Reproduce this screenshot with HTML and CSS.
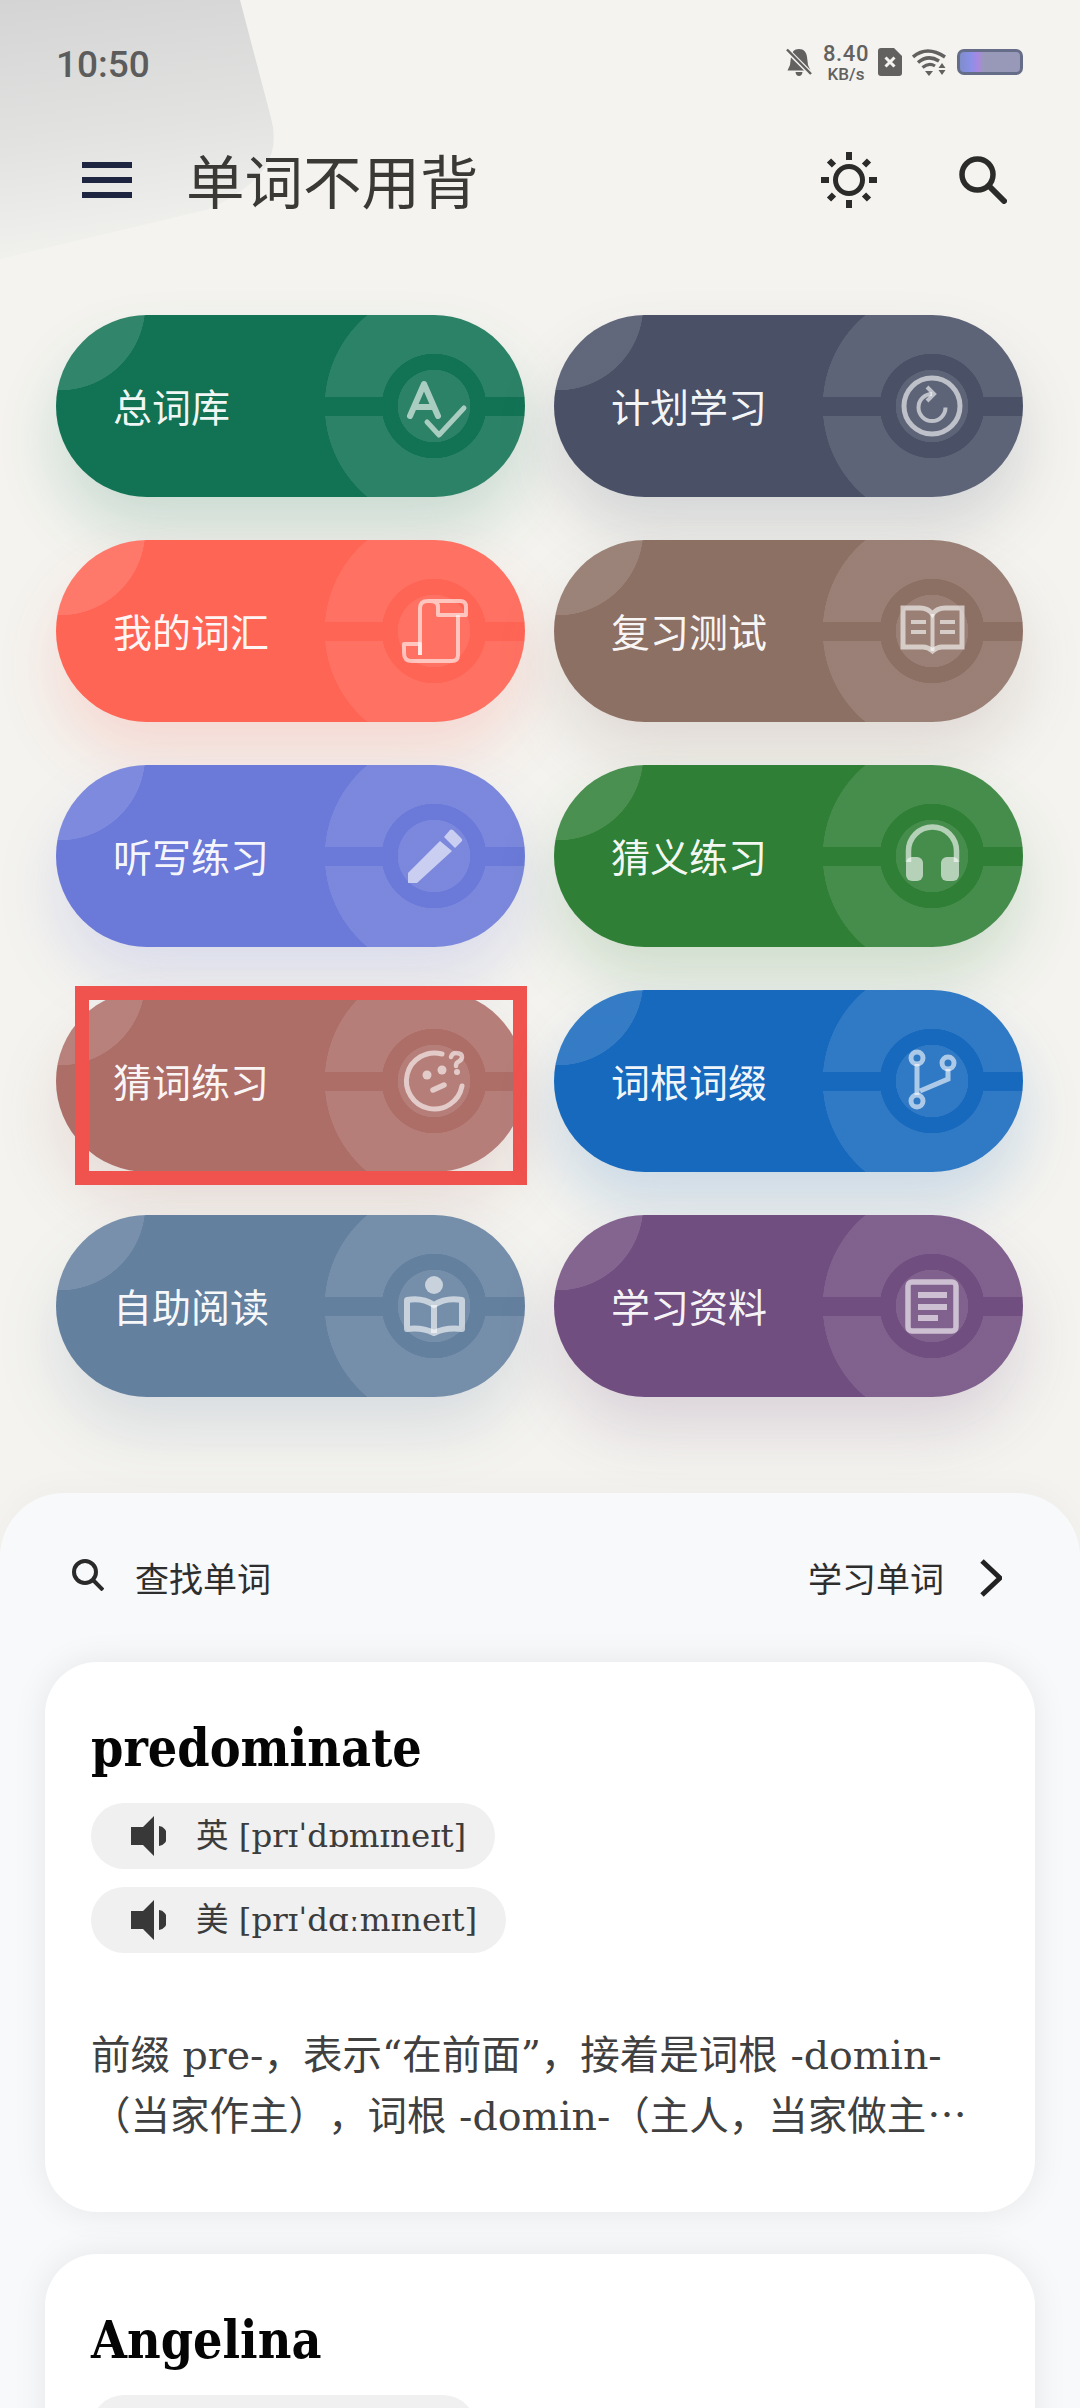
FILE: index.html
```html
<!DOCTYPE html>
<html lang="zh-CN">
<head>
<meta charset="utf-8">
<title>单词不用背</title>
<link rel="stylesheet" href="styles.css">
</head>
<body>
<svg class="decor" width="280" height="262" viewBox="0 0 280 262" aria-hidden="true">
  <defs><linearGradient id="decorFill" x1="0" y1="0" x2="0.15" y2="1"><stop offset="0" stop-color="#d4d4d4"/><stop offset="0.55" stop-color="#e2e2e1"/><stop offset="1" stop-color="#f1f1ee"/></linearGradient></defs>
  <path d="M0 0H240L271 118Q276 136 272 152Q262 186 206 210L0 259Z" fill="url(#decorFill)"/>
</svg>

<header class="statusbar">
  <span class="time">10:50</span>
  <div class="status-icons">
    <svg class="st-bell" width="26" height="28" viewBox="0 0 26 28"><path d="M13 1C8 1 5.500 4.500 5 9L4 17L1.500 22.500H24.500L22 17L21 9C20.500 4.500 18 1 13 1ZM9.500 24H16.500Q16 28 13 28Q10 28 9.500 24Z" fill="#626160"/><path d="M1 2L25 26" stroke="#f4f3ef" stroke-width="5"/><path d="M1 1.500L25 26" stroke="#626160" stroke-width="2.500"/></svg>
    <div class="netspeed"><span class="net-num">8.40</span><span class="net-unit">KB/s</span></div>
    <svg class="st-sim" width="24" height="28" viewBox="0 0 24 28"><path d="M3 0H16L24 8V25Q24 28 21 28H3Q0 28 0 25V3Q0 0 3 0Z" fill="#626160"/><path d="M7.500 9.500L16.500 18.500M16.500 9.500L7.500 18.500" stroke="#f4f3ef" stroke-width="3"/></svg>
    <svg class="st-wifi" width="35" height="28" viewBox="0 0 35 28"><path d="M1 9Q15 -3 33 9" fill="none" stroke="#626160" stroke-width="3.500"/><path d="M6 14.500Q16 6 27 13" fill="none" stroke="#626160" stroke-width="3.500"/><path d="M10.500 19.500Q17 14 23 18" fill="none" stroke="#626160" stroke-width="3.200"/><path d="M13 23H21L17 28Z" fill="#626160"/><path d="M30 15L33.500 20H26.500ZM26.500 22H33.500L30 27Z" fill="#626160"/></svg>
    <div class="battery"></div>
  </div>
</header>

<div class="appbar">
  <div class="menu"><span></span><span></span><span></span></div>
  <h1 class="app-title">单词不用背</h1>
  <svg class="sun" width="58" height="58" viewBox="0 0 58 58" fill="none" stroke="#2b2b2a"><circle cx="29" cy="29" r="13.500" stroke-width="5"/><path d="M29 1V9M29 49V57M1 29H9M49 29H57" stroke-width="6"/><path d="M9 9.500L14 14.500M49 9.500L44 14.500M9 48.500L14 43.500M49 48.500L44 43.500" stroke-width="6"/></svg>
  <svg class="search-big" width="48" height="48" viewBox="0 0 48 48" fill="none" stroke="#2b2b2a"><circle cx="18.500" cy="18.500" r="15.500" stroke-width="5.500"/><path d="M31 31L45 45" stroke-width="6" stroke-linecap="round"/></svg>
</div>

<main class="grid">
  <a class="pill c-green"><span class="pill-label">总词库</span>
    <svg class="pill-icon" viewBox="0 0 72 72" fill="none" stroke="currentColor" stroke-linecap="round" stroke-linejoin="round"><path d="M12 46L26 14L40 46M17 37H35" stroke-width="6"/><path d="M29 52L41 65L66 38" stroke-width="5"/></svg>
  </a>
  <a class="pill c-slate"><span class="pill-label">计划学习</span>
    <svg class="pill-icon" viewBox="0 0 72 72" fill="none" stroke="currentColor"><circle cx="36" cy="36" r="28" stroke-width="5"/><path d="M36 24A13.500 13.500 0 1 0 49.500 37.500" stroke-width="4"/><path d="M31 17L38 24L31 31" stroke-width="4"/></svg>
  </a>
  <a class="pill c-red"><span class="pill-label">我的词汇</span>
    <svg class="pill-icon" viewBox="0 0 72 72" fill="none" stroke="currentColor" stroke-linejoin="round"><path d="M22 60V13Q22 6 30 6H62Q68 6 68 12V20H40V12Q40 6 32 6" stroke-width="4"/><path d="M60 20V60Q60 66 54 66H14Q6 66 6 58V49H22V60" stroke-width="4"/></svg>
  </a>
  <a class="pill c-brown"><span class="pill-label">复习测试</span>
    <svg class="pill-icon" viewBox="0 0 72 72" fill="none" stroke="currentColor"><path d="M7 13H24Q32 13 36.500 19Q41 13 49 13H66V52H46Q41 52 36.500 56Q32 52 27 52H7Z" stroke-width="5"/><path d="M36.500 19V56" stroke-width="4"/><path d="M15 27H30M15 37H30M44 27H59M44 37H59" stroke-width="4"/></svg>
  </a>
  <a class="pill c-peri"><span class="pill-label">听写练习</span>
    <svg class="pill-icon" viewBox="0 0 72 72" fill="currentColor"><path d="M52 10Q53 9 55 10L63 18Q65 20 64 21L57 28L46 17Z"/><path d="M42 21L54 31L19 63H10V53Z"/></svg>
  </a>
  <a class="pill c-forest"><span class="pill-label">猜义练习</span>
    <svg class="pill-icon" viewBox="0 0 72 72" fill="none" stroke="currentColor"><path d="M12.500 42V31A24 24 0 0 1 60.500 31V42" stroke-width="5.500"/><rect x="10" y="37" width="17" height="24" rx="6" fill="currentColor" stroke="none"/><rect x="45" y="37" width="18" height="24" rx="6" fill="currentColor" stroke="none"/></svg>
  </a>
  <a class="pill c-rose"><span class="pill-label">猜词练习</span>
    <svg class="pill-icon" viewBox="0 0 72 72" fill="none" stroke="currentColor" stroke-linecap="round"><path d="M44 9A28 28 0 1 0 64 41" stroke-width="5"/><circle cx="29" cy="30" r="4.500" fill="currentColor" stroke="none"/><circle cx="44" cy="25" r="4.500" fill="currentColor" stroke="none"/><circle cx="59" cy="27" r="3" fill="currentColor" stroke="none"/><path d="M35 45L46 40" stroke-width="5.500"/><path d="M53 12Q54 8 58 8Q64 8 64 12Q64 15 60 17Q58 18 58 21" stroke-width="4.500"/></svg>
    <span class="highlight"></span>
  </a>
  <a class="pill c-blue"><span class="pill-label">词根词缀</span>
    <svg class="pill-icon" viewBox="0 0 72 72" fill="none" stroke="currentColor" stroke-width="5"><circle cx="21" cy="13" r="6"/><circle cx="52" cy="18" r="6"/><circle cx="21" cy="56" r="6"/><path d="M21 19V50M24 46L52 34V24"/></svg>
  </a>
  <a class="pill c-steel"><span class="pill-label">自助阅读</span>
    <svg class="pill-icon" viewBox="0 0 72 72" fill="none" stroke="currentColor" stroke-width="6" stroke-linejoin="round"><circle cx="36" cy="15" r="9" fill="currentColor" stroke="none"/><path d="M9 30Q24 27 36 35Q48 27 64 30V59Q48 57 36 63Q24 57 9 59Z"/><path d="M36 35V63"/></svg>
  </a>
  <a class="pill c-purple"><span class="pill-label">学习资料</span>
    <svg class="pill-icon" viewBox="0 0 72 72" fill="none" stroke="currentColor"><rect x="12" y="12" width="48" height="49" rx="4" stroke-width="5.500"/><path d="M22 25H51M22 37H51M22 48H42" stroke-width="6"/></svg>
  </a>
</main>

<section class="sheet">
  <div class="sheet-head">
    <div class="head-left">
      <svg class="search-small" width="32" height="32" viewBox="0 0 32 32" fill="none" stroke="#2a2a2a"><circle cx="13" cy="13" r="11" stroke-width="4"/><path d="M21 21L31 31" stroke-width="4"/></svg>
      <span class="head-text">查找单词</span>
    </div>
    <div class="head-right">
      <span class="head-text">学习单词</span>
      <svg class="chevron" width="22" height="38" viewBox="0 0 22 38" fill="none" stroke="#222"><path d="M2 2L20 19L2 36" stroke-width="5"/></svg>
    </div>
  </div>

  <article class="card">
    <h2 class="word">predominate</h2>
    <div class="phons">
      <div class="phon"><svg class="speaker" width="35" height="40" viewBox="0 0 35 40"><path d="M0 11H12L23 0V40L12 29H0ZM28 10A8 10 0 0 1 28 30Z"/></svg><span class="phon-text">英 [prɪˈdɒmɪneɪt]</span></div>
      <div class="phon"><svg class="speaker" width="35" height="40" viewBox="0 0 35 40"><path d="M0 11H12L23 0V40L12 29H0ZM28 10A8 10 0 0 1 28 30Z"/></svg><span class="phon-text">美 [prɪˈdɑːmɪneɪt]</span></div>
    </div>
    <p class="desc">前缀 pre-，表示“在前面”，接着是词根 -domin-（当家作主），词根 -domin-（主人，当家做主<span class="ellipsis">…</span></p>
  </article>

  <article class="card">
    <h2 class="word">Angelina</h2>
    <div class="phons">
      <div class="phon phon-stub"><svg class="speaker" width="35" height="40" viewBox="0 0 35 40"><path d="M0 11H12L23 0V40L12 29H0ZM28 10A8 10 0 0 1 28 30Z"/></svg></div>
    </div>
  </article>
</section>
</body>
</html>
```
FILE: styles.css
```css
* { box-sizing: border-box; }
html, body { margin: 0; padding: 0; }
body {
  position: relative;
  width: 1080px;
  height: 2408px;
  overflow: hidden;
  background: #f4f3ef;
  font-family: "Noto Sans CJK SC", "Noto Sans", sans-serif;
}
.decor { position: absolute; left: 0; top: 0; }

/* status bar */
.statusbar {
  position: relative;
  height: 90px;
  padding: 40px 57px 0 56px;
  display: flex;
  justify-content: space-between;
  align-items: flex-start;
}
.time {
  margin-top: 3px;
  font-family: Roboto, sans-serif;
  font-weight: 500;
  font-size: 37px;
  line-height: 44px;
  color: #5c5c5c;
}
.status-icons { display: flex; align-items: center; height: 46px; margin-top: -1px; }
.st-bell { margin-right: 10px; }
.netspeed {
  display: flex;
  flex-direction: column;
  align-items: center;
  width: 48px;
  padding-top: 4px;
  font-family: Roboto, sans-serif;
  font-weight: 500;
  color: #626160;
  margin-right: 8px;
}
.net-num { font-size: 22px; line-height: 20px; letter-spacing: 0.6px; }
.net-unit { font-size: 17px; line-height: 20px; }
.st-sim { margin-right: 10px; }
.st-wifi { margin-right: 10px; }
.battery {
  width: 66px;
  height: 26px;
  border: 3px solid #666d88;
  border-radius: 7px;
  background: linear-gradient(90deg, #7f8dca 0%, #8a90e8 18%, #a888e0 30%, #9899b8 40%, #9899b8 100%);
}

/* app bar */
.appbar {
  position: relative;
  height: 180px;
  padding: 0 73px 0 82px;
  display: flex;
  align-items: center;
}
.menu { width: 50px; display: flex; flex-direction: column; gap: 9px; }
.menu span { display: block; height: 6px; background: #1e2540; }
.app-title {
  margin: -3px 0 0 54px;
  flex: 1;
  font-size: 58.5px;
  line-height: 80px;
  font-weight: 400;
  color: #3a3935;
}
.sun { margin-right: 81px; }

/* pills */
.grid {
  margin-top: 45px;
  padding-left: 56px;
  display: grid;
  grid-template-columns: 469px 469px;
  grid-auto-rows: 182px;
  column-gap: 29px;
  row-gap: 43px;
}
.pill {
  --c: #127354;
  --o: rgba(255, 255, 255, 0.11);
  position: relative;
  display: flex;
  align-items: center;
  justify-content: space-between;
  padding: 0 55px 0 57px;
  border-radius: 91px;
  color: rgba(255, 255, 255, 0.96);
  box-shadow: 0 34px 60px color-mix(in srgb, var(--c) 18%, transparent);
  background:
    radial-gradient(circle at 378px 91px, var(--o) 36px, transparent 36.5px),
    radial-gradient(circle at 378px 91px, var(--c) 52px, transparent 52.5px),
    linear-gradient(var(--c), var(--c)) 269px 82px / 200px 19px no-repeat,
    radial-gradient(circle at 387px 91px, var(--o) 118px, transparent 118.5px),
    radial-gradient(circle at 4px -10px, rgba(255, 255, 255, 0.13) 85px, transparent 85.5px),
    var(--c);
}
.pill-label { font-size: 39px; line-height: 50px; margin-top: -2px; }
.pill-icon { width: 72px; height: 72px; color: rgba(255, 255, 255, 0.6); }
.c-green { --c: #127354; }
.c-slate { --c: #4a5167; }
.c-red { --c: #ff6555; --o: rgba(255, 255, 255, 0.08); }
.c-brown { --c: #8d7064; }
.c-peri { --c: #6b79d8; }
.c-forest { --c: #2f7f36; }
.c-rose { --c: #ad6e68; }
.c-blue { --c: #1769bd; }
.c-steel { --c: #64809f; }
.c-purple { --c: #714e80; }
.highlight {
  position: absolute;
  left: 19px;
  top: -4px;
  width: 452px;
  height: 199px;
  border: 14px solid #f0524d;
}

/* bottom sheet */
.sheet {
  margin-top: 96px;
  height: 915px;
  overflow: hidden;
  border-radius: 64px 64px 0 0;
  background: #f8f9fb;
  box-shadow: 0 -8px 30px rgba(0, 0, 0, 0.025);
}
.sheet-head {
  height: 169px;
  padding: 0 78px 0 72px;
  display: flex;
  justify-content: space-between;
  align-items: center;
}
.head-left, .head-right { display: flex; align-items: center; }
.head-text { font-size: 34px; line-height: 44px; color: #2e2e2e; }
.search-small { margin-right: 31px; margin-top: -5px; }
.chevron { margin-left: 36px; }

.card {
  margin: 0 45px 42px;
  height: 550px;
  padding: 51px 46px 0;
  border-radius: 52px;
  background: #fff;
  box-shadow: 0 0 34px rgba(0, 0, 0, 0.08);
}
.word {
  margin: 0;
  font-family: "DejaVu Serif Condensed", "DejaVu Serif", serif;
  font-stretch: condensed;
  font-weight: 700;
  font-size: 51.5px;
  line-height: 70px;
  color: #050505;
}
.phons {
  margin-top: 20px;
  display: flex;
  flex-direction: column;
  align-items: flex-start;
  gap: 18px;
}
.phon {
  display: flex;
  align-items: center;
  height: 66px;
  padding: 0 29px 0 40px;
  border-radius: 33px;
  background: #f0f0f1;
}
.phon-stub { width: 385px; }
.speaker { fill: #383838; margin-right: 30px; flex: none; }
.phon-text {
  font-family: "DejaVu Serif", "Noto Sans CJK SC", serif;
  font-size: 32.5px;
  line-height: 44px;
  color: #3c3c3c;
  white-space: nowrap;
}
.desc {
  margin: 73px 0 0;
  font-family: "DejaVu Serif", "Noto Sans CJK SC", serif;
  font-size: 39.5px;
  line-height: 58px;
  color: #404040;
  text-spacing-trim: space-all;
}
.ellipsis { font-family: "Noto Sans CJK SC", sans-serif; margin-left: 1px; }
```
